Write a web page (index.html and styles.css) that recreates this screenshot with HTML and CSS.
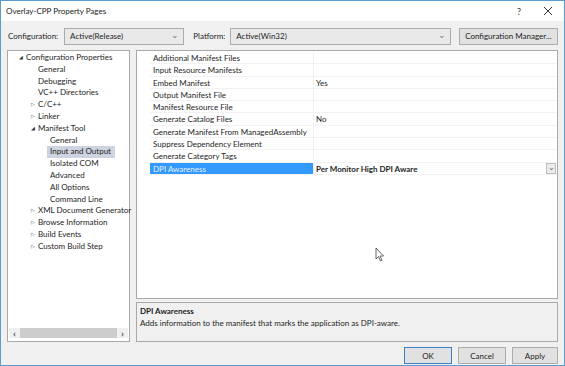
FILE: index.html
```html
<!DOCTYPE html>
<html lang="en">
<head>
  <meta charset="UTF-8">
  <title>Overlay-CPP Property Pages</title>
  <link rel="stylesheet" href="styles.css">
</head>
<body>
  <div class="window">
    <!-- Title bar -->
    <div class="titlebar">
      <span class="title">Overlay-CPP Property Pages</span>
      <span class="help">?</span>
      <svg class="close" width="10" height="10" viewBox="0 0 10 10">
        <path d="M1 1 L9 9 M9 1 L1 9" stroke="#333" stroke-width="1" fill="none"/>
      </svg>
    </div>

    <!-- Configuration row -->
    <div class="toolbar">
      <span class="label">Configuration:</span>
      <div class="combo combo-config"><span>Active(Release)</span><span class="chev">&#8964;</span></div>
      <span class="label label-platform">Platform:</span>
      <div class="combo combo-platform"><span>Active(Win32)</span><span class="chev">&#8964;</span></div>
      <div class="btn btn-manager">Configuration Manager...</div>
    </div>

    <div class="main">
      <!-- Tree -->
      <div class="tree">
        <div class="tree-items">
          <div class="node l0"><span class="tri open">&#9698;</span>Configuration Properties</div>
          <div class="node l1">General</div>
          <div class="node l1">Debugging</div>
          <div class="node l1">VC++ Directories</div>
          <div class="node l1"><span class="tri">&#9655;</span>C/C++</div>
          <div class="node l1"><span class="tri">&#9655;</span>Linker</div>
          <div class="node l1"><span class="tri open">&#9698;</span>Manifest Tool</div>
          <div class="node l2">General</div>
          <div class="node l2"><span class="selected">Input and Output</span></div>
          <div class="node l2">Isolated COM</div>
          <div class="node l2">Advanced</div>
          <div class="node l2">All Options</div>
          <div class="node l2">Command Line</div>
          <div class="node l1"><span class="tri">&#9655;</span>XML Document Generator</div>
          <div class="node l1"><span class="tri">&#9655;</span>Browse Information</div>
          <div class="node l1"><span class="tri">&#9655;</span>Build Events</div>
          <div class="node l1"><span class="tri">&#9655;</span>Custom Build Step</div>
        </div>
        <div class="hscroll">
          <span class="arrow">&lsaquo;</span>
          <div class="thumb"></div>
          <span class="arrow">&rsaquo;</span>
        </div>
      </div>

      <!-- Property grid + description -->
      <div class="right">
        <div class="props">
          <div class="row"><div class="name">Additional Manifest Files</div><div class="value"></div></div>
          <div class="row"><div class="name">Input Resource Manifests</div><div class="value"></div></div>
          <div class="row"><div class="name">Embed Manifest</div><div class="value">Yes</div></div>
          <div class="row"><div class="name">Output Manifest File</div><div class="value"></div></div>
          <div class="row"><div class="name">Manifest Resource File</div><div class="value"></div></div>
          <div class="row"><div class="name">Generate Catalog Files</div><div class="value">No</div></div>
          <div class="row"><div class="name">Generate Manifest From ManagedAssembly</div><div class="value"></div></div>
          <div class="row"><div class="name">Suppress Dependency Element</div><div class="value"></div></div>
          <div class="row"><div class="name">Generate Category Tags</div><div class="value"></div></div>
          <div class="row active">
            <div class="name">DPI Awareness</div>
            <div class="value">Per Monitor High DPI Aware<span class="drop">&#8964;</span></div>
          </div>
        </div>
        <div class="desc">
          <div class="desc-title">DPI Awareness</div>
          <div class="desc-text">Adds information to the manifest that marks the application as DPI-aware.</div>
        </div>
      </div>
    </div>

    <div class="footer">
      <div class="btn btn-default">OK</div>
      <div class="btn">Cancel</div>
      <div class="btn btn-apply">Apply</div>
    </div>

    <!-- mouse pointer -->
    <svg class="cursor" width="10" height="16" viewBox="0 0 10 16">
      <path d="M1 1 L1 12 L3.5 9.5 L5.5 14 L7 13.3 L5 9 L8.5 9 Z" fill="#fff" stroke="#555" stroke-width="0.9"/>
    </svg>
  </div>
</body>
</html>
```

FILE: styles.css
```css
body {
  margin: 0;
  padding: 0;
  font-family: Lato, 'Noto Sans', sans-serif;
  font-size: 8px;
  color: #1e1e1e;
  background: #f0f0f0;
}

.window {
  position: relative;
  width: 565px;
  height: 366px;
  box-sizing: border-box;
  border: 1px solid #5c9ccc;
  background: #f0f0f0;
  overflow: hidden;
}

/* Title bar */
.titlebar {
  height: 20px;
  background: #fff;
  display: flex;
  align-items: center;
  padding-left: 5px;
}

.title {
  flex: 1;
  color: #222;
}

.help {
  margin-right: 22px;
  font-size: 9px;
  color: #333;
}

.close {
  margin-right: 11px;
}

/* Configuration row */
.toolbar {
  display: flex;
  align-items: center;
  height: 18px;
  margin: 6px 0 5px 0;
  padding: 0 6px 0 7px;
  white-space: nowrap;
}

.label {
  margin-right: 6px;
}

.label-platform {
  margin-left: 9px;
  margin-right: 5px;
}

.combo {
  height: 17px;
  box-sizing: border-box;
  border: 1px solid #acacac;
  background: #e9e9e9;
  display: flex;
  align-items: center;
  justify-content: space-between;
  padding: 0 4px 0 5px;
}

.combo-config {
  width: 121px;
}

.combo-platform {
  width: 222px;
}

.chev {
  color: #777;
  font-size: 9px;
  line-height: 1;
  margin-top: -3px;
}

.btn {
  height: 17px;
  box-sizing: border-box;
  border: 1px solid #adadad;
  background: #e1e1e1;
  display: flex;
  align-items: center;
  justify-content: center;
  width: 48px;
  white-space: nowrap;
}

.btn-manager {
  width: 100px;
  margin-left: 8px;
}

/* Main area */
.main {
  display: flex;
  gap: 6px;
  padding: 0 6px 0 6px;
  height: 292px;
}

.tree {
  width: 123px;
  box-sizing: border-box;
  border: 1px solid #a9a9a9;
  background: #fff;
  display: flex;
  flex-direction: column;
  justify-content: space-between;
}

.tree-items {
  padding-top: 1px;
}

.node {
  height: 11.8px;
  line-height: 11.8px;
  white-space: nowrap;
  position: relative;
}

.l0 { padding-left: 18px; }
.l1 { padding-left: 30px; }
.l2 { padding-left: 42px; }

.selected {
  display: inline-block;
  background: #cdd3e0;
  margin-left: -3px;
  padding: 0 4px 0 3px;
}

.tri {
  position: absolute;
  font-family: 'DejaVu Sans', sans-serif;
  font-size: 5px;
  color: #444;
  margin-left: -7px;
}

.tri.open {
  color: #333;
}

.hscroll {
  height: 10px;
  margin: 0 1px 3px 1px;
  display: flex;
  align-items: center;
  background: #f0f0f0;
}

.arrow {
  width: 11px;
  text-align: center;
  font-size: 10px;
  line-height: 10px;
  color: #555;
  font-weight: bold;
}

.thumb {
  flex: 1;
  height: 10px;
  background: #cdcdcd;
}

.right {
  flex: 1;
  display: flex;
  flex-direction: column;
  gap: 3px;
}

.props {
  flex: 1;
  border: 1px solid #a9a9a9;
  background: #fff;
  padding-top: 1px;
}

.row {
  display: flex;
  height: 12.3px;
  line-height: 12.3px;
  box-sizing: border-box;
  border-bottom: 1px solid #f2f2f2;
  margin-left: 13px;
}

.name {
  width: 160px;
  padding-left: 3px;
  border-right: 1px solid #f0f0f0;
  white-space: nowrap;
  overflow: hidden;
}

.value {
  flex: 1;
  padding-left: 2px;
  position: relative;
}

.row.active .name {
  background: #3399ff;
  color: #e8f2ff;
}

.row.active .value {
  font-weight: bold;
}

.drop {
  position: absolute;
  right: 1px;
  top: 0;
  width: 10px;
  height: 11px;
  box-sizing: border-box;
  border: 1px solid #bdbdbd;
  background: #ececec;
  font-weight: normal;
  font-size: 8px;
  line-height: 7px;
  text-align: center;
  color: #666;
}

.desc {
  height: 40px;
  box-sizing: border-box;
  border: 1px solid #a9a9a9;
  background: #f0f0f0;
  padding: 2px 3px;
}

.desc-title {
  font-weight: bold;
  line-height: 12px;
}

.desc-text {
  line-height: 12px;
}

/* Buttons */
.footer {
  display: flex;
  justify-content: flex-end;
  gap: 6px;
  padding: 5px 6px 0 0;
}

.btn-default {
  border-color: #3c82c8;
}

.btn-apply {
  width: 46px;
}

.cursor {
  position: absolute;
  left: 374px;
  top: 246px;
}
```
